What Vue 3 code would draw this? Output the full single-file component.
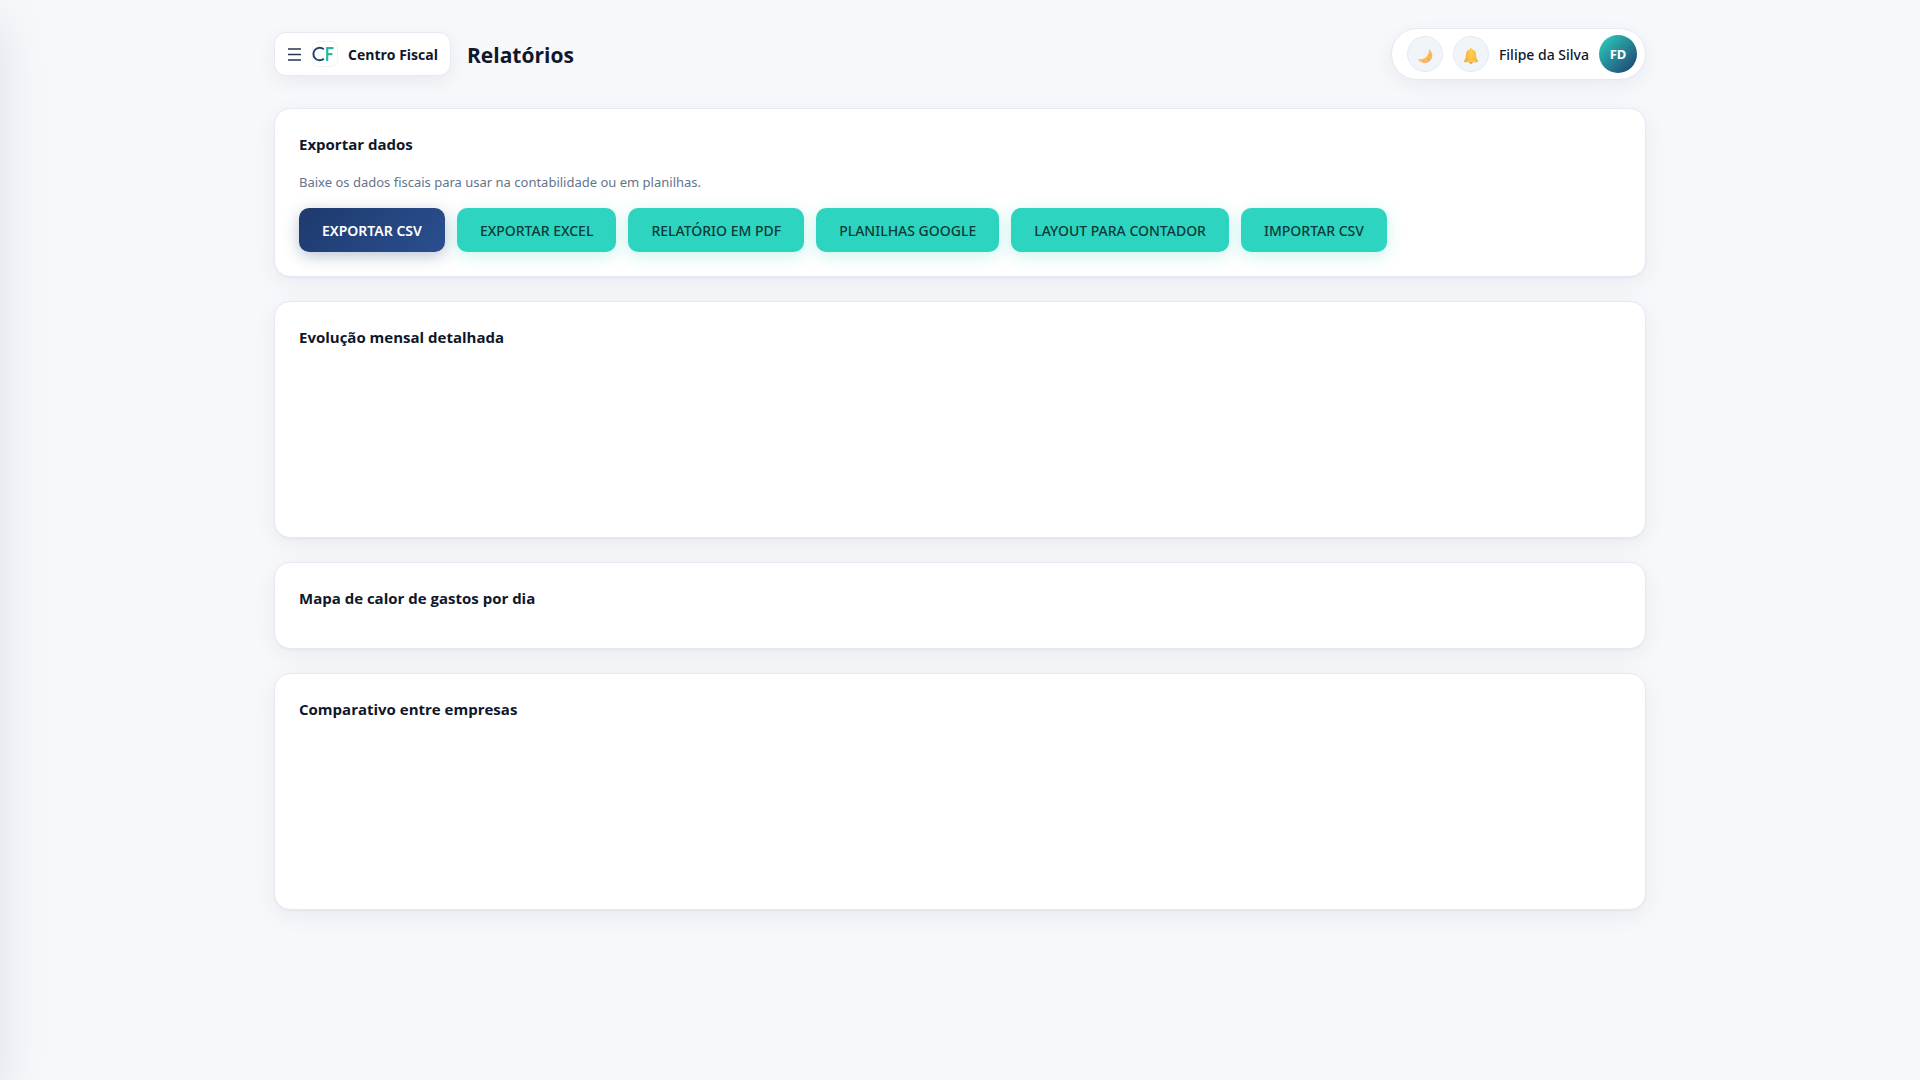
<template>
  <aside class="sidebar" aria-hidden="true"></aside>
  <div class="page">
    <header class="topbar">
      <div class="topbar-left">
        <button class="brand" type="button">
          <svg class="brand-menu" viewBox="0 0 13 13" aria-hidden="true">
            <path d="M0 1h13M0 6.5h13M0 12h13" />
          </svg>
          <svg class="brand-logo" viewBox="0 0 26 26" aria-hidden="true">
            <rect x="0.5" y="0.5" width="25" height="25" rx="6" fill="#fff" stroke="#f0f2f6" />
            <path d="M11.8 8.2A6.3 6.3 0 1 0 11.8 17.8" fill="none" stroke="#27466f" stroke-width="2" />
            <path d="M15.2 20V7.2h6.3M15.2 13.2h5.2" fill="none" stroke="#2bb5a2" stroke-width="2.2" />
          </svg>
          <span class="brand-name">Centro Fiscal</span>
        </button>
        <h1 class="title">Relatórios</h1>
      </div>
      <div class="user">
        <button class="round" type="button" aria-label="Alternar tema">
          <svg viewBox="0 0 18 18">
            <defs>
              <linearGradient id="moon" x1="0" y1="0" x2="1" y2="1">
                <stop offset="0" stop-color="#ffb347" />
                <stop offset="0.6" stop-color="#fcc063" />
                <stop offset="1" stop-color="#ee9a5a" />
              </linearGradient>
            </defs>
            <path d="M13.4 1C17.500 4 18.500 9 15.600 13.200 12 18.300 4.500 18.300 0.800 12.300 6.500 14 14 10 13.400 1Z" fill="url(#moon)" />
            <circle cx="14.400" cy="7.500" r="0.8" fill="#e99a4e" />
            <circle cx="12.600" cy="12" r="0.7" fill="#e99a4e" />
            <circle cx="7.500" cy="14.700" r="0.8" fill="#e99a4e" />
          </svg>
        </button>
        <button class="round" type="button" aria-label="Notificações">
          <svg viewBox="0 0 18 18">
            <defs>
              <linearGradient id="bell" x1="0" y1="0" x2="1" y2="0">
                <stop offset="0" stop-color="#f9a849" />
                <stop offset="0.5" stop-color="#ffcf4b" />
                <stop offset="1" stop-color="#f8b13e" />
              </linearGradient>
            </defs>
            <circle cx="9" cy="16" r="1.8" fill="#e98a4c" />
            <path d="M9 0.200c1 0 1.600.7 1.600 1.600C13.500 2.500 14.600 4.800 14.700 7.500l.6 4.500L17 14.500Q17.200 16 16 16H2Q0.800 16 1 14.500L2.700 12l.6-4.500C3.400 4.800 4.500 2.500 7.400 1.800 7.400 0.900 8 0.200 9 0.200Z" fill="url(#bell)" />
            <path d="M2.700 12.500h12.600" stroke="#f3a63e" stroke-width="0.6" />
          </svg>
        </button>
        <span class="user-name">Filipe da Silva</span>
        <span class="avatar">FD</span>
      </div>
    </header>

    <main class="cards">
      <section class="card">
        <h2>Exportar dados</h2>
        <p class="hint">Baixe os dados fiscais para usar na contabilidade ou em planilhas.</p>
        <div class="actions">
          <button
            v-for="action in actions"
            :key="action.label"
            type="button"
            class="btn"
            :class="{ primary: action.primary }"
          >{{ action.label }}</button>
        </div>
      </section>
      <section class="card">
        <h2>Evolução mensal detalhada</h2>
        <div class="chart"></div>
      </section>
      <section class="card">
        <h2>Mapa de calor de gastos por dia</h2>
      </section>
      <section class="card">
        <h2>Comparativo entre empresas</h2>
        <div class="chart"></div>
      </section>
    </main>
  </div>
</template>

<script setup>
const actions = [
  { label: 'EXPORTAR CSV', primary: true },
  { label: 'EXPORTAR EXCEL' },
  { label: 'RELATÓRIO EM PDF' },
  { label: 'PLANILHAS GOOGLE' },
  { label: 'LAYOUT PARA CONTADOR' },
  { label: 'IMPORTAR CSV' }
]
</script>

<style>
body {
  background: #f7f8fc;
}
</style>

<style scoped>
/* closed drawer, only its shadow reaches the page */
.sidebar {
  position: fixed;
  top: 0;
  bottom: 0;
  left: -280px;
  width: 280px;
  box-shadow: 0 20px 50px rgba(15, 23, 42, 0.1);
}
.page {
  box-sizing: border-box;
  max-width: 1420px;
  margin: 0 auto;
  padding: 28px 24px;
  font-family: "Noto Sans", sans-serif;
  color: #0f172a;
}
button {
  font-family: inherit;
  color: inherit;
  cursor: pointer;
}
.topbar {
  display: flex;
  align-items: center;
  justify-content: space-between;
  margin-bottom: 28px;
}
.topbar-left {
  display: flex;
  align-items: center;
  gap: 16px;
}
.brand {
  display: flex;
  align-items: center;
  height: 44px;
  padding: 0 12px 0 13px;
  background: #fff;
  border: 1px solid #e5e9f2;
  border-radius: 12px;
  box-shadow: 0 6px 20px rgba(15, 23, 42, 0.06);
}
.brand-menu {
  width: 13px;
  height: 13px;
  margin-right: 11px;
  fill: none;
  stroke: #27384f;
  stroke-width: 1.3;
}
.brand-logo {
  width: 26px;
  height: 26px;
  margin-right: 10px;
}
.brand-name,
.title,
.card h2 {
  font-family: "Open Sans", sans-serif;
  font-weight: 700;
}
.brand-name {
  font-size: 14px;
}
.title {
  margin: 0;
  padding-top: 2px;
  font-size: 21px;
  line-height: 32px;
}
.user {
  box-sizing: border-box;
  display: flex;
  align-items: center;
  gap: 10px;
  height: 52px;
  padding: 0 8px 0 15px;
  background: #fff;
  border: 1px solid #e5e9f2;
  border-radius: 26px;
  box-shadow: 0 6px 20px rgba(15, 23, 42, 0.06);
}
.round {
  display: grid;
  place-items: center;
  width: 36px;
  height: 36px;
  padding: 3px 0 0;
  background: #f1f4f9;
  border: 1px solid #e5e9f2;
  border-radius: 50%;
}
.round svg {
  width: 16px;
  height: 16px;
}
.user-name {
  font-size: 14px;
  font-weight: 500;
}
.avatar {
  display: grid;
  place-items: center;
  width: 38px;
  height: 38px;
  border-radius: 50%;
  background: linear-gradient(135deg, #2dd4bf, #1e3a6e);
  color: #fff;
  font-size: 13px;
  font-weight: 700;
}
.cards {
  display: flex;
  flex-direction: column;
  gap: 24px;
}
.card {
  padding: 24px;
  background: #fff;
  border: 1px solid #e5e9f2;
  border-radius: 16px;
  box-shadow: 0 1px 2px rgba(15, 23, 42, 0.04), 0 6px 24px rgba(15, 23, 42, 0.06);
}
.card h2 {
  margin: 0 0 15px;
  font-size: 15px;
  line-height: 22px;
}
.hint {
  margin: 0 0 14px;
  color: #64748b;
  font-size: 13px;
  line-height: 24px;
}
.actions {
  display: flex;
  flex-wrap: wrap;
  gap: 12px;
}
.btn {
  height: 44px;
  padding: 0 23px;
  background: #2dd4bf;
  border: 0;
  border-radius: 10px;
  box-shadow: 0 4px 16px rgba(45, 212, 191, 0.25);
  color: #0b3b38;
  font-size: 14px;
  font-weight: 500;
}
.btn.primary {
  background: linear-gradient(135deg, #1e3a6e, #2a4f8f);
  box-shadow: 0 4px 16px rgba(30, 58, 110, 0.3);
  color: #fff;
  font-weight: 600;
}
.chart {
  height: 150px;
}
</style>
